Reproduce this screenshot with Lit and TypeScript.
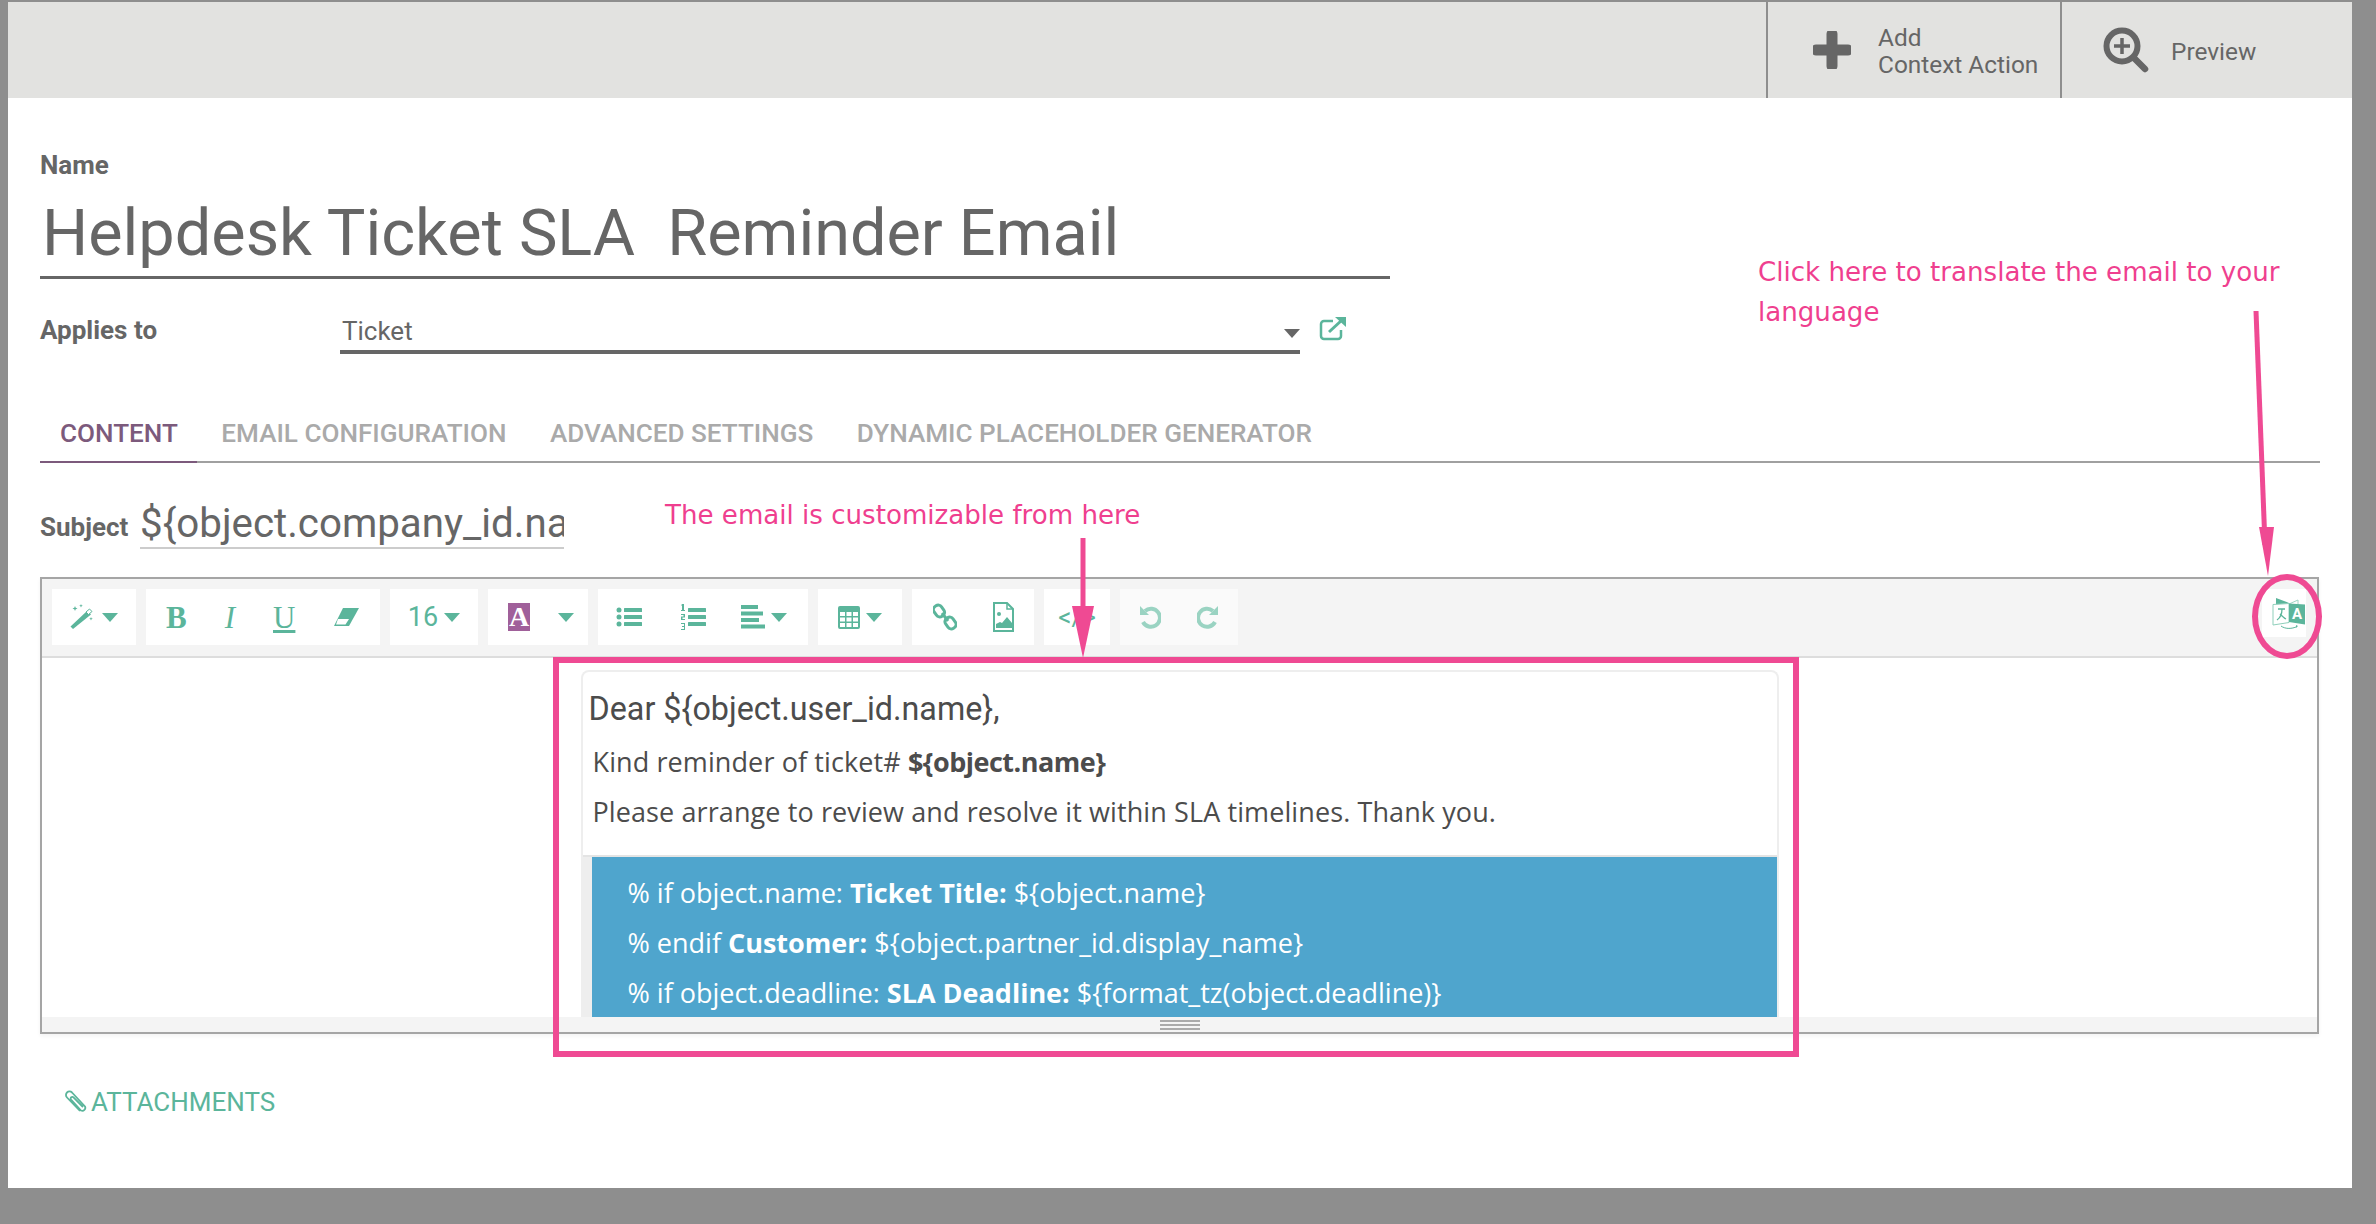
import { LitElement, html, css, svg } from "lit";
import { customElement } from "lit/decorators.js";

const caret = html`<svg class="caret" width="16" height="9" viewBox="0 0 16 9"><path d="M0 0h16L8 9z" fill="currentColor"/></svg>`;

const wand = html`<svg width="26" height="26" viewBox="0 0 26 26" fill="currentColor"><path d="M3 25L0.500 22.500 17 7l4 3.500z"/><path d="M16 8l3.500-3 2.500 2.500-3.500 3z" stroke="currentColor" fill="#fff"/><path d="M5 2l.7 1.800L7.500 4.500 5.700 5.200 5 7 4.300 5.200 2.500 4.500 4.300 3.800zM11 0l.5 1.300 1.300.5-1.300.5L11 3.600l-.5-1.300-1.300-.5 1.300-.5zM21 13l.5 1.300 1.300.5-1.300.5-.5 1.300-.5-1.300-1.300-.5 1.300-.5z"/></svg>`;
const eraser = html`<svg width="26" height="20" viewBox="0 0 26 20"><path d="M10 1h16L16 19H1z" fill="currentColor"/><path d="M5 12h11l-3.500 5.500H3z" fill="#fff"/></svg>`;
const listUl = html`<svg width="26" height="22" viewBox="0 0 26 22" fill="currentColor"><circle cx="3" cy="4" r="2.500"/><circle cx="3" cy="11" r="2.500"/><circle cx="3" cy="18" r="2.500"/><rect x="8" y="2" width="18" height="4" rx=".5"/><rect x="8" y="9" width="18" height="4" rx=".5"/><rect x="8" y="16" width="18" height="4" rx=".5"/></svg>`;
const listOl = html`<svg width="26" height="28" viewBox="0 0 26 28" fill="currentColor"><rect x="8" y="5" width="18" height="4" rx=".5"/><rect x="8" y="12" width="18" height="4" rx=".5"/><rect x="8" y="19" width="18" height="4" rx=".5"/><path d="M2 1h2v6h1v1H1V7h1V2.500H1zM1 11h4v3.500H2.500V16H5v1H1v-3.500h2.500V12H1zM1 20h4v7H1v-1h3v-2H2v-1h2v-2H1z"/></svg>`;
const align = html`<svg width="24" height="24" viewBox="0 0 24 24" fill="currentColor"><rect x="0" y="0" width="17" height="4"/><rect x="0" y="6.500" width="22" height="4"/><rect x="0" y="13" width="18" height="4"/><rect x="0" y="19.500" width="24" height="4"/></svg>`;
const table = html`<svg width="22" height="23" viewBox="0 0 22 23" fill="currentColor"><path fill-rule="evenodd" d="M2 0h18a2 2 0 012 2v19a2 2 0 01-2 2H2a2 2 0 01-2-2V2a2 2 0 012-2zM2 6v4h5V6zm6.500 0v4h5V6zM15 6v4h5V6zM2 11.500v4h5v-4zm6.500 0v4h5v-4zm6.500 0v4h5v-4zM2 17v4h5v-4zm6.500 0v4h5v-4zm6.500 0v4h5v-4z"/></svg>`;
const link = html`<svg width="24" height="28" viewBox="0 0 24 28" fill="none" stroke="currentColor" stroke-width="3"><rect x="1.500" y="2" width="9" height="12" rx="4" transform="rotate(-35 6 8)"/><rect x="13" y="14" width="9" height="12" rx="4" transform="rotate(-35 17.500 20)"/><path d="M9 10l6 8"/></svg>`;
const image = html`<svg width="21" height="30" viewBox="0 0 21 30"><path d="M1 1h13l6 6v22H1z" fill="none" stroke="currentColor" stroke-width="2"/><path d="M14 1v6h6" fill="none" stroke="currentColor" stroke-width="1.500"/><circle cx="6" cy="12" r="2" fill="currentColor"/><path d="M3 26v-4l4-2 2 1 5-6 5 6v5z" fill="currentColor"/></svg>`;
const undo = html`<svg width="22" height="26" viewBox="0 0 22 26" fill="none" stroke="currentColor" stroke-width="4"><path d="M6 7a9 9 0 11-2 11"/><path d="M1 2l0 9h9z" fill="currentColor" stroke="none"/></svg>`;
const redo = html`<svg width="22" height="26" viewBox="0 0 22 26" fill="none" stroke="currentColor" stroke-width="4"><path d="M16 7a9 9 0 10 2 11"/><path d="M21 2v9h-9z" fill="currentColor" stroke="none"/></svg>`;
const translate = html`<svg width="34" height="33" viewBox="0 0 34 33"><path d="M17 7l9-4 0 8" fill="none" stroke="#9fd6c5" stroke-width="1"/><path d="M4 1l13 5v4H4z" fill="#5bb59b"/><path d="M1 7.500l16 -1v19L1 28z" fill="#fff" stroke="#8fcfbb" stroke-width="1"/><path d="M17 6.500l16 1v20l-16-2.500z" fill="#5bb59b"/><path d="M6 12h7M10 12c0 5-2 9-5 11M8 17c2 2 4 4 6 5" fill="none" stroke="#5bb59b" stroke-width="1.300"/><text x="25" y="22" text-anchor="middle" font-family="Roboto, sans-serif" font-weight="700" font-size="15" fill="#fff">A</text><path d="M9 29c4 3 10 3 15 1" fill="none" stroke="#5bb59b" stroke-width="1"/><path d="M24 28l2 1-2 2z" fill="#5bb59b"/></svg>`;

@customElement("app-root")
export class AppRoot extends LitElement {
  static styles = css`
    :host {
      display: block;
      width: 2376px;
      height: 1224px;
      background: #8e8e8e;
      position: relative;
      overflow: hidden;
      font-family: Roboto, "Open Sans", sans-serif;
      color: #666;
    }
    .window {
      margin: 2px 0 0 8px;
      width: 2344px;
      height: 1186px;
      background: #fff;
      display: flex;
      flex-direction: column;
    }
    .topbar {
      height: 96px;
      background: #e2e2e0;
      display: flex;
      justify-content: flex-end;
      flex: none;
    }
    .tb {
      border-left: 2px solid #8e8e8e;
      display: flex;
      align-items: center;
      box-sizing: border-box;
      font-size: 24.400px;
      line-height: 27px;
      color: #666;
    }
    .tb .lab { padding-top: 2px; }
    .tb.add { width: 294px; padding-left: 45px; gap: 27px; }
    .tb.prev { width: 292px; padding-left: 41px; gap: 22px; }
    .sheet { padding: 53px 0 0 32px; flex: 1; display: flex; flex-direction: column; }
    .lbl { font-weight: 700; font-size: 26px; line-height: 28px; color: #666; }
    .title {
      width: 1348px;
      margin-top: 16px;
      height: 81px;
      box-sizing: content-box;
      border-bottom: 3px solid #666;
      font-size: 64.800px;
      line-height: 76px;
      color: #666;
      padding-left: 2px;
      white-space: pre;
    }
    .applies { display: flex; align-items: flex-start; margin-top: 38px; height: 54px; }
    .applies .lbl { width: 300px; margin-top: -1px; }
    .sel {
      width: 960px;
      height: 33px;
      box-sizing: content-box;
      border-bottom: 4px solid #666;
      display: flex;
      justify-content: space-between;
      align-items: center;
      font-size: 26px;
      color: #666;
    }
    .sel span { padding: 0 0 5px 2px; }
    .sel .caret { color: #666; margin-bottom: 1px; }
    .ext { margin: 0 0 0 19px; color: #5bb59b; }
    .tabs {
      margin: 35px 25px 0 0;
      width: 2280px;
      border-bottom: 2px solid #a0a0a0;
      display: flex;
      gap: 43.500px;
      height: 55px;
      box-sizing: content-box;
      font-size: 26.100px;
      font-weight: 500;
      color: #aaa;
      line-height: 54px;
    }
    .tab { white-space: nowrap; }
    .tab.on {
      color: #7c5a7c;
      padding: 0 19px 0 20px;
      border-bottom: 2px solid #7c5a7c;
      height: 55px;
      margin-right: -19px;
    }
    .subject { display: flex; align-items: flex-end; margin-top: 38px; height: 48px; }
    .subject .lbl { width: 100px; line-height: 30px; padding-bottom: 7px; flex: none; }
    .subject .val {
      width: 424px;
      overflow: hidden;
      white-space: nowrap;
      font-size: 40.300px;
      line-height: 46px;
      border-bottom: 2px solid #ccc;
      color: #666;
      flex: none;
    }
    .editor {
      margin-top: 28px;
      width: 2279px;
      height: 457px;
      box-sizing: border-box;
      border: 2px solid #a5a5a5;
      display: flex;
      flex-direction: column;
      box-shadow: 0 2px 4px rgba(0,0,0,.05);
    }
    .toolbar {
      background: #f4f4f4;
      height: 79px;
      box-sizing: border-box;
      flex: none;
      border-bottom: 2px solid #ddd;
      padding: 10px 11px 0 10px;
      display: flex;
      gap: 10px;
      color: #5bb59b;
    }
    .grp {
      background: #fff;
      height: 56px;
      display: flex;
      align-items: center;
      justify-content: center;
      flex: none;
    }
    .g-style { width: 84px; gap: 6px; }
    .g-font { width: 234px; gap: 38px; justify-content: flex-start; padding-left: 20px; box-sizing: border-box; }
    .g-size { width: 88px; gap: 6px; }
    .g-color { width: 100px; gap: 28px; justify-content: flex-start; padding-left: 20px; box-sizing: border-box; }
    .g-list { width: 210px; justify-content: flex-start; padding-left: 18px; box-sizing: border-box; }
    .g-list svg:nth-child(1) { margin-right: 38px; }
    .g-list svg:nth-child(2) { margin-right: 35px; }
    .g-list svg:nth-child(3) { margin-right: 6px; }
    .g-table { width: 84px; gap: 6px; }
    .g-ins { width: 122px; gap: 36px; }
    .g-code { width: 66px; font-family: Roboto, sans-serif; font-size: 26px; }
    .g-hist { width: 118px; gap: 36px; background: #fafafa; color: #9ad3c2; }
    .g-tr { width: 44px; height: 48px; justify-content: flex-end; }
    .spacer { flex: 1; }
    .glyph { font-family: "Liberation Serif", serif; font-size: 31px; line-height: 1; }
    .fs { font-family: Roboto, sans-serif; font-size: 27px; }
    .a-color {
      background: #a0609a;
      color: #fff;
      width: 22px;
      height: 28px;
      text-align: center;
      font-family: "Liberation Serif", serif;
      font-weight: 700;
      font-size: 28px;
      line-height: 28px;
    }
    .body {
      flex: 1;
      min-height: 0;
      overflow: hidden;
      background: #fff;
      display: flex;
      justify-content: center;
      padding-top: 12px;
    }
    .card {
      width: 1198px;
      height: 400px;
      flex: none;
      box-sizing: border-box;
      border: 2px solid #eee;
      border-bottom: 0;
      border-radius: 8px 8px 0 0;
      color: #4c4c4c;
    }
    .dear { font-family: Roboto, sans-serif; font-size: 32.300px; line-height: 36px; padding: 19px 0 0 6px; }
    .msg { font-family: "Open Sans", sans-serif; font-size: 27px; line-height: 50px; padding-left: 10px; white-space: nowrap; letter-spacing: .1px; }
    .msg.first { margin-top: 10px; }
    .msg b { font-weight: 700; letter-spacing: -.5px; }
    .sect { margin-top: 18px; padding-left: 9px; background: #eee; border-top: 2px solid #e4e4e4; }
    .blue {
      background: #4fa5cd;
      color: #fff;
      padding: 11px 0 0 36px;
      font-family: "Open Sans", sans-serif;
      font-size: 27px;
      line-height: 50px;
      height: 300px;
      white-space: nowrap;
    }
    .foot {
      height: 15px;
      flex: none;
      background: #f4f4f4;
      display: flex;
      justify-content: center;
      align-items: center;
    }
    .grip { width: 40px; height: 10px; border-top: 2px solid #aaa; border-bottom: 2px solid #aaa; box-sizing: border-box; }
    .grip::after { content: ""; display: block; height: 2px; background: #aaa; margin-top: 2px; }
    .attach {
      margin: 52px 0 0 24px;
      display: flex;
      align-items: center;
      gap: 4px;
      font-size: 26px;
      color: #5bb59b;
      line-height: 32px;
    }
    .overlay { position: absolute; left: 0; top: 0; pointer-events: none; }
    .note {
      position: absolute;
      font-family: "DejaVu Sans", Verdana, sans-serif;
      color: #ef3f8f;
      font-size: 26.100px;
      line-height: 40px;
      white-space: nowrap;
    }
    .n1 { left: 1758px; top: 252px; }
    .n2 { left: 665px; top: 495px; }
    .mark { position: absolute; box-sizing: border-box; border: 6px solid #ef4a93; }
    .box { left: 553px; top: 657px; width: 1246px; height: 400px; }
    .ring { left: 2252px; top: 574px; width: 70px; height: 85px; border-radius: 50%; }
  `;

  render() {
    return html`
      <div class="window">
        <div class="topbar">
          <div class="tb add">
            <svg width="38" height="38" viewBox="0 0 38 38"><path d="M19 3v32M3 19h32" stroke="#666" stroke-width="11" stroke-linecap="round" fill="none"/></svg>
            <div class="lab">Add<br />Context Action</div>
          </div>
          <div class="tb prev">
            <svg width="46" height="46" viewBox="0 0 46 46"><circle cx="19" cy="19" r="15.500" fill="none" stroke="#666" stroke-width="6"/><path d="M31 31l11 11" stroke="#666" stroke-width="6.500" stroke-linecap="round"/><path d="M19 11v16M11 19h16" stroke="#666" stroke-width="3.500"/></svg>
            <div class="lab">Preview</div>
          </div>
        </div>
        <div class="sheet">
          <div class="lbl">Name</div>
          <div class="title">Helpdesk Ticket SLA  Reminder Email</div>
          <div class="applies">
            <div class="lbl">Applies to</div>
            <div class="sel"><span>Ticket</span>${caret}</div>
            <svg class="ext" width="28" height="24" viewBox="0 0 28 24" fill="none" stroke="currentColor" stroke-width="2.500"><path d="M14 4H5a3 3 0 00-3 3v12a3 3 0 003 3h14a3 3 0 003-3v-6"/><path d="M10 15L23 3" stroke-width="3"/><path d="M16 0h11v10z" fill="currentColor" stroke="none"/></svg>
          </div>
          <div class="tabs">
            <div class="tab on">CONTENT</div>
            <div class="tab">EMAIL CONFIGURATION</div>
            <div class="tab">ADVANCED SETTINGS</div>
            <div class="tab">DYNAMIC PLACEHOLDER GENERATOR</div>
          </div>
          <div class="subject">
            <div class="lbl">Subject</div>
            <div class="val">\${object.company_id.name}</div>
          </div>
          <div class="editor">
            <div class="toolbar">
              <div class="grp g-style">${wand}${caret}</div>
              <div class="grp g-font"><span class="glyph"><b>B</b></span><span class="glyph"><i>I</i></span><span class="glyph"><u>U</u></span>${eraser}</div>
              <div class="grp g-size"><span class="fs">16</span>${caret}</div>
              <div class="grp g-color"><span class="a-color">A</span>${caret}</div>
              <div class="grp g-list">${listUl}${listOl}${align}${caret}</div>
              <div class="grp g-table">${table}${caret}</div>
              <div class="grp g-ins">${link}${image}</div>
              <div class="grp g-code">&lt;/&gt;</div>
              <div class="grp g-hist">${undo}${redo}</div>
              <div class="spacer"></div>
              <div class="grp g-tr">${translate}</div>
            </div>
            <div class="body">
              <div class="card">
                <div class="dear">Dear \${object.user_id.name},</div>
                <div class="msg first">Kind reminder of ticket# <b>\${object.name}</b></div>
                <div class="msg">Please arrange to review and resolve it within SLA timelines. Thank you.</div>
                <div class="sect">
                  <div class="blue">
                    <div>% if object.name: <b>Ticket Title:</b> \${object.name}</div>
                    <div>% endif <b>Customer:</b> \${object.partner_id.display_name}</div>
                    <div>% if object.deadline: <b>SLA Deadline:</b> \${format_tz(object.deadline)}</div>
                  </div>
                </div>
              </div>
            </div>
            <div class="foot"><div class="grip"></div></div>
          </div>
          <div class="attach">
            <svg width="23" height="24" viewBox="0 0 23 24" fill="none" stroke="currentColor" stroke-width="1.800"><path d="M16 21L3 7.500a3.500 3.500 0 015-5l13 14a3 3 0 01-4 4L7 9.500a1.600 1.600 0 012.500-2L19 17"/></svg>
            <span>ATTACHMENTS</span>
          </div>
        </div>
      </div>
      <div class="note n1">Click here to translate the email to your<br />language</div>
      <div class="note n2">The email is customizable from here</div>
      <div class="mark box"></div>
      <div class="mark ring"></div>
      <svg class="overlay" width="2376" height="1224" viewBox="0 0 2376 1224">
        ${svg`<path d="M1083 538V610" stroke="#ef4a93" stroke-width="5" fill="none"/>
        <path d="M1072 606h22l-11 52z" fill="#ef4a93"/>
        <path d="M2256 311L2265 545" stroke="#ef4a93" stroke-width="5" fill="none"/>
        <path d="M2259 527h15l-6 49z" fill="#ef4a93"/>`}
      </svg>
    `;
  }
}
